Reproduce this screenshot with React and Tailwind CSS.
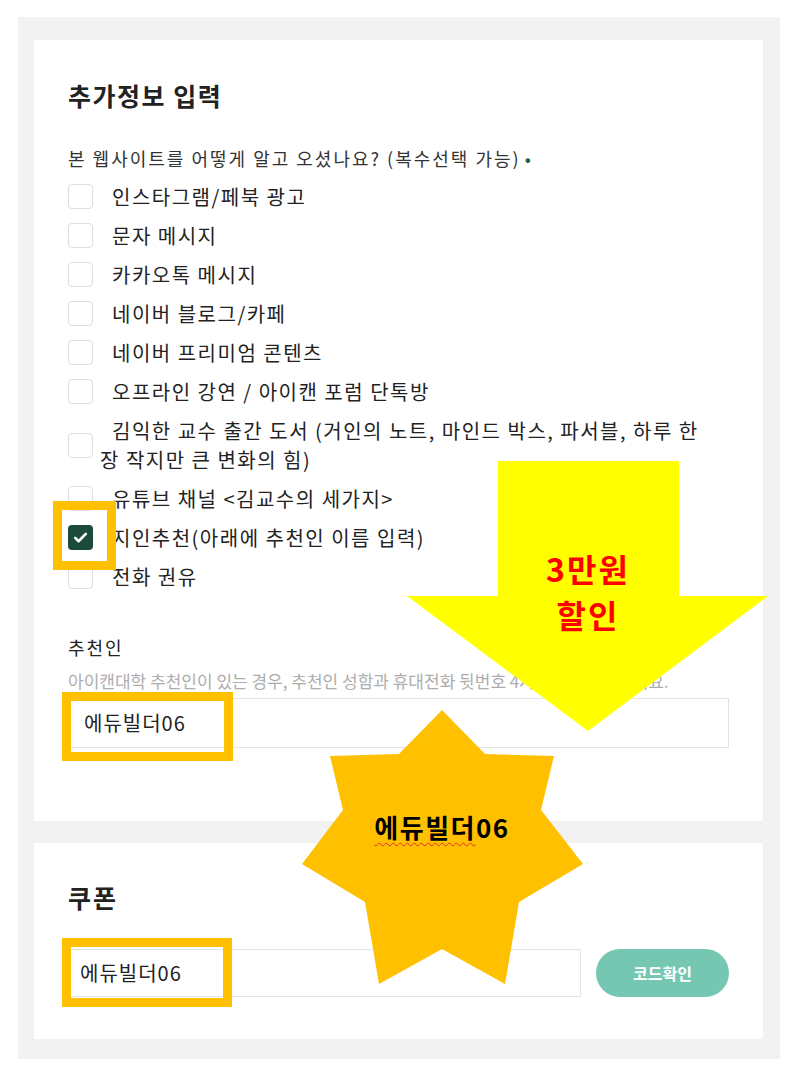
import React from "react";

const font = { fontFamily: '"Noto Sans CJK KR", "Noto Sans", sans-serif' };

const options = [
  "인스타그램/페북 광고",
  "문자 메시지",
  "카카오톡 메시지",
  "네이버 블로그/카페",
  "네이버 프리미엄 콘텐츠",
  "오프라인 강연 / 아이캔 포럼 단톡방",
  "book",
  "유튜브 채널 <김교수의 세가지>",
  "지인추천(아래에 추천인 이름 입력)",
  "전화 권유",
];

function Box({ checked }) {
  if (checked) {
    return (
      <div className="relative w-[25px] h-[25px] shrink-0 rounded-[4px] bg-[#1d4b3b] flex items-center justify-center">
        <svg width="17" height="17" viewBox="0 0 24 24" fill="none" stroke="white" strokeWidth="3.6" strokeLinecap="round" strokeLinejoin="round">
          <path d="M4.5 12.5l4.8 4.8L19.5 7" />
        </svg>
        <div className="absolute left-[-15px] top-[-24px] w-[63px] h-[69px] border-[9px] border-[#ffc000]" />
      </div>
    );
  }
  return <div className="w-[25px] h-[25px] shrink-0 rounded-[4px] border border-[#dedede] bg-white" />;
}

function Option({ label, checked }) {
  return (
    <div className="flex items-center">
      <Box checked={checked} />
      <div className="ml-[7px] indent-[12px] text-[20px] leading-[29px] tracking-[1.5px] text-[#222]">
        {label === "book" ? (
          <>
            김익한 교수 출간 도서 (거인의 노트, 마인드 박스, 파서블, 하루 한
            <br />
            장 작지만 큰 변화의 힘)
          </>
        ) : (
          label
        )}
      </div>
    </div>
  );
}

export default function App() {
  return (
    <div className="relative w-[802px] h-[1082px] bg-white overflow-hidden" style={font}>
      <div className="ml-[18px] mt-[17px] w-[762px] bg-[#f2f2f2] pt-[23px] pl-[16px] pr-[17px] pb-[20px] flex flex-col gap-[22px]">
        {/* 추가정보 카드 */}
        <div className="bg-white h-[781px] px-[34px] pt-[37px]">
          <h2 className="text-[25px] leading-[36px] font-bold tracking-[1.5px] text-[#222]">추가정보 입력</h2>
          <div className="mt-[31px] text-[18px] leading-[28px] text-[#333] tracking-[2px]">
            본 웹사이트를 어떻게 알고 오셨나요? (복수선택 가능)
            <span className="text-[#1b5e45] ml-[4px]">•</span>
          </div>
          <div className="mt-[10px] flex flex-col gap-[10px]">
            {options.map((o, i) => (
              <Option key={i} label={o} checked={i === 8} />
            ))}
          </div>

          <div className="mt-[42px] text-[18px] leading-[28px] tracking-[2px] text-[#222]">추천인</div>
          <div className="mt-[8px] text-[17px] leading-[24px] text-[#adadad]">
            아이캔대학 추천인이 있는 경우, 추천인 성함과 휴대전화 뒷번호 4자리를 입력해주세요.
          </div>
          <div className="relative mt-[5px]">
            <div className="h-[50px] border border-[#e3e3e3] flex items-center pl-[15px] text-[20px] tracking-[1px] text-[#222]">
              에듀빌더06
            </div>
            <div className="absolute left-[-6px] top-[-6px] w-[171px] h-[69px] border-[9px] border-[#ffc000]" />
          </div>
        </div>

        {/* 쿠폰 카드 */}
        <div className="bg-white h-[196px] px-[34px] pt-[36px]">
          <h2 className="text-[25px] leading-[36px] font-bold tracking-[2px] text-[#222]">쿠폰</h2>
          <div className="mt-[34px] flex gap-[15px]">
            <div className="relative flex-1">
              <div className="h-[48px] border border-[#e3e3e3] flex items-center pl-[11px] text-[20px] tracking-[1px] text-[#222]">
                에듀빌더06
              </div>
              <div className="absolute left-[-6px] top-[-11px] w-[170px] h-[69px] border-[9px] border-[#ffc000]" />
            </div>
            <button className="w-[133px] h-[48px] rounded-[24px] bg-[#75c7b2] text-white text-[16px] font-bold">
              코드확인
            </button>
          </div>
        </div>
      </div>

      {/* 화살표와 별 */}
      <svg className="absolute left-0 top-0 pointer-events-none" width="802" height="1082" viewBox="0 0 802 1082">
        <polygon points="498,461 679,461 679,596 768,596 588,731 407,596 498,596" fill="#ffff00" />
        <polygon
          points="442,710 485,754 554,756 541,810 583,864 519,902 505,984 442,949 379,984 365,902 302,864 343,810 330,756 399,754"
          fill="#ffc000"
        />
      </svg>
      <div className="absolute left-[488px] top-[545px] w-[200px] flex flex-col items-center text-[32px] leading-[46px] font-bold tracking-[2px] text-[#ff0000]">
        <span>3만원</span>
        <span>할인</span>
      </div>
      <div className="absolute left-[342px] top-[810px] w-[200px] text-center text-[26px] leading-[34px] font-bold text-black tracking-[1.5px]">
        <span className="underline decoration-wavy decoration-[#e03030] decoration-1 underline-offset-[4px]">에듀빌더</span>06
      </div>
    </div>
  );
}
